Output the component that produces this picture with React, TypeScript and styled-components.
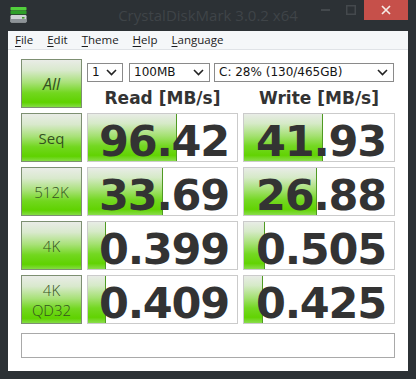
import React from "react";
import styled, { createGlobalStyle } from "styled-components";

const Global = createGlobalStyle`
  html, body { margin: 0; padding: 0; background: #2c3135; }
  body { width: 416px; height: 379px; overflow: hidden; }
`;

const Window = styled.div`
  width: 416px;
  height: 379px;
  box-sizing: border-box;
  background: #2c3135;
  padding: 0 8px 8px;
  display: flex;
  flex-direction: column;
`;

const TitleBar = styled.div`
  height: 31px;
  flex: none;
  display: grid;
  grid-template-columns: 1fr auto 1fr;
  align-items: start;
`;

const AppIcon = styled.svg`
  display: block;
  margin: 7px 0 0 2px;
`;

const Title = styled.div`
  font-family: "Open Sans", "Noto Sans", sans-serif;
  font-size: 15px;
  line-height: 20px;
  padding-top: 5px;
  color: #3f4448;
  white-space: nowrap;
`;

const Captions = styled.div`
  justify-self: end;
  display: flex;
`;

const CaptionButton = styled.div<{ $w: number; $close?: boolean }>`
  width: ${(p) => p.$w}px;
  height: 20px;
  display: flex;
  align-items: center;
  justify-content: center;
  background: ${(p) => (p.$close ? "#c6504a" : "transparent")};
`;

const Client = styled.div`
  flex: 1;
  background: #ffffff;
  display: flex;
  flex-direction: column;
`;

const MenuBar = styled.div`
  height: 18px;
  flex: none;
  background: #f5f7f9;
  border-bottom: 1px solid #e0e3e7;
  display: flex;
  gap: 14px;
  padding-left: 7px;
  font-family: "Open Sans", "Noto Sans", sans-serif;
  font-size: 11.5px;
  line-height: 18px;
  color: #1b1b1b;
`;

const MenuItem = styled.span`
  u { text-decoration-thickness: 1px; text-underline-offset: 2px; }
`;

const Content = styled.div`
  padding: 9px 13px;
  display: grid;
  grid-template-columns: 61px 151px 152px;
  grid-template-rows: repeat(5, 49px) 29px;
  column-gap: 5px;
  row-gap: 5px;
`;

const TestButton = styled.div<{ $italic?: boolean; $size?: number; $weight?: number }>`
  box-sizing: border-box;
  border: 1px solid #7d8f72;
  background: linear-gradient(
    to bottom,
    #e9ece7 0%,
    #d9e9cd 22%,
    #a8e178 48%,
    #72d71f 70%,
    #5fd200 90%,
    #84dc44 100%
  );
  display: flex;
  flex-direction: column;
  align-items: center;
  justify-content: center;
  font-family: "Open Sans", "Noto Sans", sans-serif;
  font-weight: ${(p) => p.$weight ?? 300};
  font-style: ${(p) => (p.$italic ? "italic" : "normal")};
  font-size: ${(p) => p.$size ?? 15}px;
  line-height: 20px;
  color: #34501f;
`;

const TopPanel = styled.div`
  grid-column: 2 / span 2;
  display: grid;
  grid-template-columns: 151px 152px;
  grid-template-rows: auto 1fr;
  column-gap: 5px;
`;

const Selects = styled.div`
  grid-column: 1 / span 2;
  display: flex;
  margin-top: 4px;
`;

const SelectBox = styled.div<{ $w: number; $gap: number }>`
  width: ${(p) => p.$w}px;
  margin-right: ${(p) => p.$gap}px;
  height: 19px;
  box-sizing: border-box;
  border: 1px solid #8a8a8a;
  background: #fff;
  display: flex;
  align-items: center;
  justify-content: space-between;
  padding: 0 5px 0 4px;
  font-family: "DejaVu Sans", sans-serif;
  font-size: 12px;
  line-height: 17px;
  color: #141414;
`;

const Header = styled.div`
  align-self: end;
  text-align: center;
  font-family: "DejaVu Sans", sans-serif;
  font-weight: bold;
  font-size: 17px;
  line-height: 20px;
  color: #333333;
  white-space: nowrap;
`;

const Cell = styled.div`
  position: relative;
  box-sizing: border-box;
  border: 1px solid #cbcbcb;
  background: #ffffff;
  display: flex;
  align-items: flex-start;
  justify-content: flex-end;
  padding: 7px 8px 0 0;
`;

const Fill = styled.div`
  position: absolute;
  left: 0;
  top: 0;
  bottom: 0;
  box-sizing: border-box;
  border-right: 1px solid #4f9a22;
  background: linear-gradient(
    to bottom,
    #e8ece6 0%,
    #d6eac8 20%,
    #a5e173 46%,
    #74d822 68%,
    #62d303 88%,
    #8add4c 100%
  );
`;

const Value = styled.span`
  position: relative;
  font-family: "DejaVu Sans", sans-serif;
  font-weight: bold;
  font-size: 43px;
  letter-spacing: -1.2px;
  line-height: 40px;
  color: #333333;
`;

const StatusBox = styled.div`
  grid-column: 1 / span 3;
  margin-top: 4px;
  box-sizing: border-box;
  border: 1px solid #a9a9a9;
  background: #ffffff;
`;

const Chevron = () => (
  <svg width="11" height="7" viewBox="0 0 11 7">
    <path d="M1 1 L5.5 5.5 L10 1" fill="none" stroke="#222" strokeWidth="1.6" />
  </svg>
);

type Row = { label: React.ReactNode; weight?: number; read: string; write: string };

const rows: Row[] = [
  { label: "Seq", weight: 400, read: "96.42", write: "41.93" },
  { label: "512K", read: "33.69", write: "26.88" },
  { label: "4K", read: "0.399", write: "0.505" },
  {
    label: (
      <>
        <span>4K</span>
        <span>QD32</span>
      </>
    ),
    read: "0.409",
    write: "0.425",
  },
];

const fillPct = (v: string) => {
  const n = parseFloat(v);
  const p = ((Math.log10(n) + 1) / 5) * 100;
  return Math.max(0, Math.min(100, p));
};

const Result = ({ value }: { value: string }) => (
  <Cell>
    <Fill style={{ width: `${fillPct(value)}%` }} />
    <Value>{value}</Value>
  </Cell>
);

export default function App() {
  return (
    <>
      <Global />
      <Window>
        <TitleBar>
          <AppIcon width="17" height="16" viewBox="0 0 17 16">
            <rect x="0.5" y="0" width="16" height="3.5" rx="0.8" fill="#52cf3c" />
            <rect x="0.5" y="3.8" width="16" height="3.5" rx="0.8" fill="#2f9f2a" />
            <rect x="0.5" y="8" width="16" height="7.5" rx="1.2" fill="#cfd3d6" />
            <rect x="0.5" y="12" width="16" height="3.5" rx="1" fill="#8d9398" />
            <rect x="12" y="10" width="2.5" height="1.6" fill="#3f9a2c" />
          </AppIcon>
          <Title>CrystalDiskMark 3.0.2 x64</Title>
          <Captions>
            <CaptionButton $w={26}>
              <svg width="9" height="2" viewBox="0 0 9 2">
                <rect x="0" y="0" width="9" height="2" fill="#44494d" />
              </svg>
            </CaptionButton>
            <CaptionButton $w={26}>
              <svg width="10" height="10" viewBox="0 0 10 10">
                <rect x="0.75" y="0.75" width="8.5" height="8.5" fill="none" stroke="#44494d" strokeWidth="1.5" />
              </svg>
            </CaptionButton>
            <CaptionButton $w={44} $close>
              <svg width="10" height="10" viewBox="0 0 10 10">
                <path d="M1 1 L9 9 M9 1 L1 9" stroke="#f6ece6" strokeWidth="1.7" />
              </svg>
            </CaptionButton>
          </Captions>
        </TitleBar>
        <Client>
          <MenuBar>
            <MenuItem><u>F</u>ile</MenuItem>
            <MenuItem><u>E</u>dit</MenuItem>
            <MenuItem><u>T</u>heme</MenuItem>
            <MenuItem><u>H</u>elp</MenuItem>
            <MenuItem><u>L</u>anguage</MenuItem>
          </MenuBar>
          <Content>
            <TestButton $italic $size={16} $weight={400}>All</TestButton>
            <TopPanel>
              <Selects>
                <SelectBox $w={36} $gap={6}>
                  <span>1</span>
                  <Chevron />
                </SelectBox>
                <SelectBox $w={81} $gap={4}>
                  <span>100MB</span>
                  <Chevron />
                </SelectBox>
                <SelectBox $w={180} $gap={0}>
                  <span>C: 28% (130/465GB)</span>
                  <Chevron />
                </SelectBox>
              </Selects>
              <Header>Read [MB/s]</Header>
              <Header>Write [MB/s]</Header>
            </TopPanel>
            {rows.map((r, i) => (
              <React.Fragment key={i}>
                <TestButton $weight={r.weight}>{r.label}</TestButton>
                <Result value={r.read} />
                <Result value={r.write} />
              </React.Fragment>
            ))}
            <StatusBox />
          </Content>
        </Client>
      </Window>
    </>
  );
}
